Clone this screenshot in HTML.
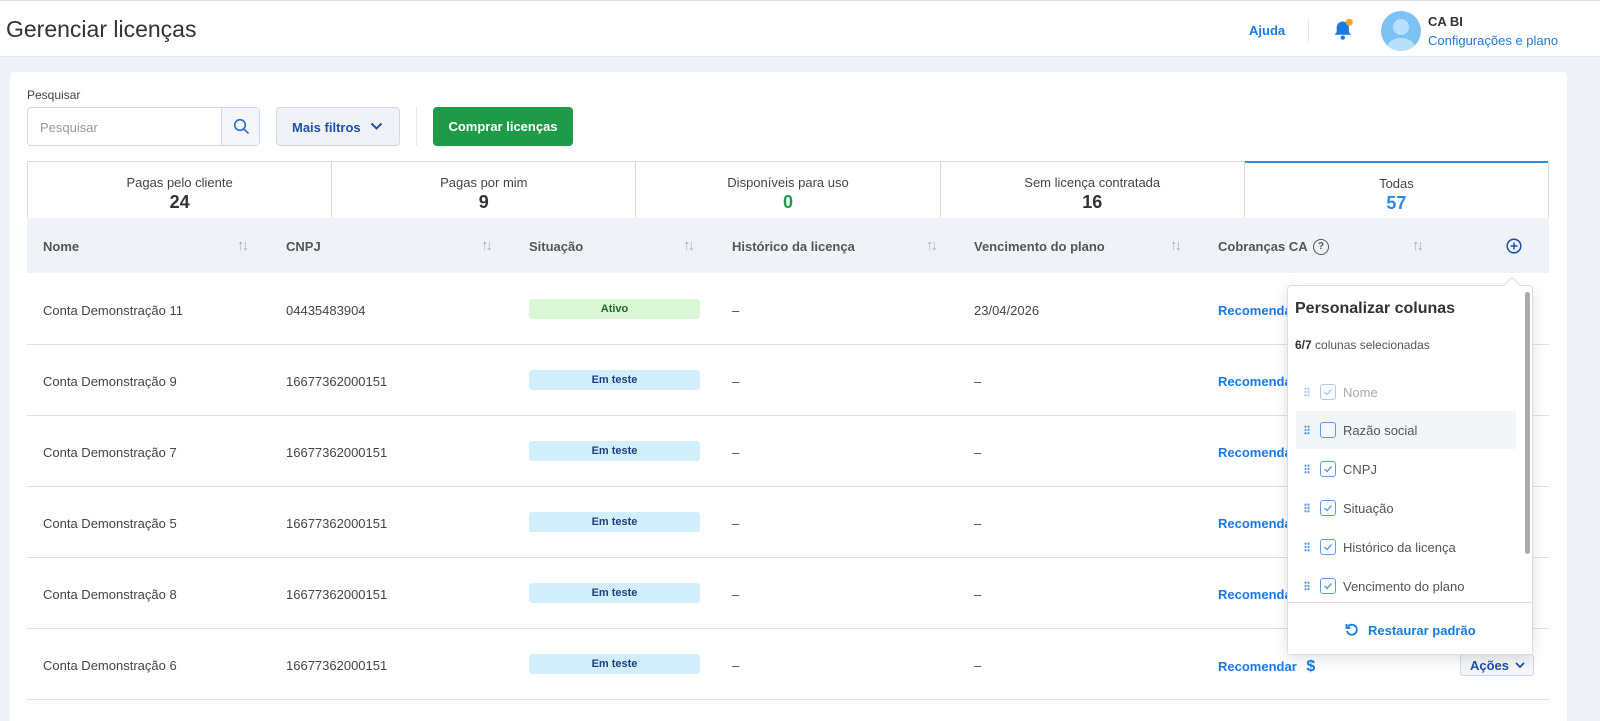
<!DOCTYPE html>
<html><head><meta charset="utf-8"><style>
*{box-sizing:border-box;margin:0;padding:0}
html,body{width:1600px;height:721px;overflow:hidden}
body{background:#eef1f6;font-family:"Liberation Sans",sans-serif;color:#333;position:relative}
.hdr{position:absolute;left:0;top:0;width:1600px;height:57px;background:#fff;border-top:1px solid #ddd;border-bottom:1px solid #e3e6ea}
.hdr h1{position:absolute;left:6px;top:15px;font-size:23px;font-weight:normal;color:#333}
.card{position:absolute;left:10px;top:72px;width:1557px;height:649px;background:#fff;border-radius:4px 4px 0 0}
.abs{position:absolute}
.blue{color:#1a7ae3}
.tabs{position:absolute;left:27px;top:161px;width:1522px;height:58px;display:flex;border:1px solid #d5dce6;border-bottom:none}
.tab{flex:1;text-align:center;border-right:1px solid #d5dce6;padding-top:13px;font-size:13px;color:#444}
.tab:last-child{border-right:none;border-top:2px solid #2f8ae8;margin-top:-1px}
.tab b{display:block;font-size:18px;margin-top:2px;color:#333}
.th{position:absolute;left:27px;top:218px;width:1522px;height:55px;background:#eff3f8}
.th span{position:absolute;top:21px;font-size:13px;font-weight:bold;color:#555}
.th i{position:absolute;top:19px;font-style:normal;color:#aab;font-size:15px;letter-spacing:-3px}
.row{position:absolute;left:27px;width:1522px;height:71px;border-bottom:1px solid #d9e1ea;font-size:13px;color:#444}
.row span{position:absolute;top:29px}
.badge{position:absolute;left:502px;top:25px;width:171px;height:20px;border-radius:3px;font-size:11px;font-weight:bold;text-align:center;line-height:20px}
.pop{position:absolute;left:1287px;top:285px;width:246px;height:370px;background:#fff;border:1px solid #d9dee6;border-radius:4px;box-shadow:0 4px 14px rgba(0,0,0,.12)}
.it{position:absolute;left:8px;width:220px;height:38px;font-size:13px;color:#555}
.it .dots{position:absolute;left:8px;top:14px;width:6px;height:10px;background:radial-gradient(circle,#5b9be8 1px,transparent 1.3px) 0 0/3px 3.3px}
.it .cb{position:absolute;left:24px;top:11px;width:16px;height:16px;border:1.5px solid #5b9be8;border-radius:3px}
.it .cb svg{position:absolute;left:2px;top:2px}
.it .t{position:absolute;left:47px;top:12px}
</style></head><body>
<div class="hdr"><h1>Gerenciar licenças</h1>
<div class="abs blue" style="left:1249px;top:22px;font-size:13px;font-weight:bold">Ajuda</div>
<div class="abs" style="left:1308px;top:18px;width:1px;height:24px;background:#e3e6ea"></div>
<svg class="abs" style="left:1331px;top:16px" width="26" height="26" viewBox="0 0 22 22"><path d="M3 15h14l-1.8-2.2V9a5.2 5.2 0 0 0-10.4 0v3.8z" fill="#1a7ae3"/><circle cx="10" cy="17.5" r="1.8" fill="#1a7ae3"/><circle cx="15.5" cy="4.5" r="3" fill="#f5a623"/></svg>
<div class="abs" style="left:1381px;top:10px;width:40px;height:40px;border-radius:50%;background:#7cc2f5;overflow:hidden"><div class="abs" style="left:12px;top:8px;width:16px;height:16px;border-radius:50%;background:#b8dffb"></div><div class="abs" style="left:6px;top:27px;width:28px;height:20px;border-radius:50%;background:#b8dffb"></div></div>
<div class="abs" style="left:1428px;top:13px;font-size:13px;font-weight:bold;color:#333">CA BI</div>
<div class="abs blue" style="left:1428px;top:32px;font-size:13px">Configurações e plano</div>
</div>
<div class="card"></div>
<div class="abs" style="left:27px;top:88px;font-size:12px;color:#444">Pesquisar</div>
<div class="abs" style="left:27px;top:107px;width:233px;height:39px;border:1px solid #cfd7e2;border-radius:4px"><span class="abs" style="left:12px;top:12px;font-size:13px;color:#999">Pesquisar</span><div class="abs" style="left:193px;top:0;width:38px;height:37px;border-left:1px solid #cfd7e2;background:#f4f6f9"><svg class="abs" style="left:11px;top:10px" width="17" height="17" viewBox="0 0 17 17"><circle cx="7" cy="7" r="5.3" fill="none" stroke="#2a6fd1" stroke-width="1.6"/><path d="M11 11l4.5 4.5" stroke="#2a6fd1" stroke-width="1.6"/></svg></div></div>
<div class="abs" style="left:276px;top:107px;width:124px;height:39px;border:1px solid #cfd7e2;border-radius:4px;background:#eff3f8;font-size:13px;font-weight:bold;color:#1f4fa8;padding:12px 0 0 15px">Mais filtros <svg style="position:absolute;left:93px;top:14px" width="13" height="9" viewBox="0 0 13 9"><path d="M1.5 1.5l5 5 5-5" fill="none" stroke="#1f4fa8" stroke-width="2"/></svg></div>
<div class="abs" style="left:416px;top:107px;width:1px;height:39px;background:#e3e6ea"></div>
<div class="abs" style="left:433px;top:107px;width:140px;height:39px;border-radius:4px;background:#1f9a48;color:#fff;font-size:13px;font-weight:bold;text-align:center;line-height:39px">Comprar licenças</div>
<div class="tabs">
<div class="tab">Pagas pelo cliente<b>24</b></div>
<div class="tab">Pagas por mim<b>9</b></div>
<div class="tab">Disponíveis para uso<b style="color:#1f9a48">0</b></div>
<div class="tab">Sem licença contratada<b>16</b></div>
<div class="tab">Todas<b style="color:#2f8ae8">57</b></div>
</div>
<div class="th">
<span style="left:16px">Nome</span><i style="left:210px">↑↓</i>
<span style="left:259px">CNPJ</span><i style="left:454px">↑↓</i>
<span style="left:502px">Situação</span><i style="left:656px">↑↓</i>
<span style="left:705px">Histórico da licença</span><i style="left:899px">↑↓</i>
<span style="left:947px">Vencimento do plano</span><i style="left:1143px">↑↓</i>
<span style="left:1191px">Cobranças CA</span><div class="abs" style="left:1286px;top:21px;width:16px;height:16px;border:1.5px solid #555;border-radius:50%;font-size:10px;font-weight:bold;color:#555;text-align:center;line-height:13px">?</div><i style="left:1385px">↑↓</i>
<svg class="abs" style="left:1479px;top:20px" width="16" height="16" viewBox="0 0 16 16"><circle cx="8" cy="8" r="6.8" fill="none" stroke="#1f4fa8" stroke-width="1.5"/><path d="M8 4.5v7M4.5 8h7" stroke="#1f4fa8" stroke-width="1.5"/></svg>
</div>
<div class="row" style="top:274px"><span style="left:16px">Conta Demonstração 11</span><span style="left:259px">04435483904</span><div class="badge" style="background:#d9f7d4;color:#1d6b2e">Ativo</div><span style="left:705px">–</span><span style="left:947px">23/04/2026</span><span class="blue" style="left:1191px;font-weight:bold">Recomendar</span></div>
<div class="row" style="top:345px"><span style="left:16px">Conta Demonstração 9</span><span style="left:259px">16677362000151</span><div class="badge" style="background:#d3eefb;color:#1f3f7a">Em teste</div><span style="left:705px">–</span><span style="left:947px">–</span><span class="blue" style="left:1191px;font-weight:bold">Recomendar</span></div>
<div class="row" style="top:416px"><span style="left:16px">Conta Demonstração 7</span><span style="left:259px">16677362000151</span><div class="badge" style="background:#d3eefb;color:#1f3f7a">Em teste</div><span style="left:705px">–</span><span style="left:947px">–</span><span class="blue" style="left:1191px;font-weight:bold">Recomendar</span></div>
<div class="row" style="top:487px"><span style="left:16px">Conta Demonstração 5</span><span style="left:259px">16677362000151</span><div class="badge" style="background:#d3eefb;color:#1f3f7a">Em teste</div><span style="left:705px">–</span><span style="left:947px">–</span><span class="blue" style="left:1191px;font-weight:bold">Recomendar</span></div>
<div class="row" style="top:558px"><span style="left:16px">Conta Demonstração 8</span><span style="left:259px">16677362000151</span><div class="badge" style="background:#d3eefb;color:#1f3f7a">Em teste</div><span style="left:705px">–</span><span style="left:947px">–</span><span class="blue" style="left:1191px;font-weight:bold">Recomendar</span></div>
<div class="row" style="top:629px"><span style="left:16px">Conta Demonstração 6</span><span style="left:259px">16677362000151</span><div class="badge" style="background:#d3eefb;color:#1f3f7a">Em teste</div><span style="left:705px">–</span><span style="left:947px">–</span><span class="blue" style="left:1191px;font-weight:bold;white-space:nowrap">Recomendar <b style="margin-left:6px;font-size:16px">$</b></span>
<div class="abs" style="left:1433px;top:25px;width:74px;height:22px;border:1px solid #cfd7e2;border-radius:3px;background:#f4f6f9;font-size:13px;font-weight:bold;color:#1f4fa8;padding:3px 0 0 9px;white-space:nowrap">Ações<svg style="position:absolute;left:54px;top:7px" width="10" height="7" viewBox="0 0 10 7"><path d="M1 1l4 4 4-4" fill="none" stroke="#1f4fa8" stroke-width="1.8"/></svg></div></div>
<div class="pop">
<div class="abs" style="left:218px;top:-7px;width:12px;height:12px;background:#fff;border-left:1px solid #d9dee6;border-top:1px solid #d9dee6;transform:rotate(45deg)"></div>
<div class="abs" style="left:7px;top:14px;font-size:16px;font-weight:bold;color:#333">Personalizar colunas</div>
<div class="abs" style="left:7px;top:52px;font-size:12px;color:#555"><b style="color:#333">6/7</b> colunas selecionadas</div>
<div class="abs" style="left:237px;top:6px;width:5px;height:262px;border-radius:3px;background:#aaa"></div>
<div class="it" style="top:87px;opacity:.5"><div class="dots"></div><div class="cb"><svg width="10" height="10" viewBox="0 0 10 10"><path d="M1.5 5l2.5 2.5 4.5-5" fill="none" stroke="#5b9be8" stroke-width="1.4"/></svg></div><div class="t">Nome</div></div>
<div class="it" style="top:125px;background:#f4f5f7"><div class="dots"></div><div class="cb"></div><div class="t">Razão social</div></div>
<div class="it" style="top:164px"><div class="dots"></div><div class="cb"><svg width="10" height="10" viewBox="0 0 10 10"><path d="M1.5 5l2.5 2.5 4.5-5" fill="none" stroke="#5b9be8" stroke-width="1.4"/></svg></div><div class="t">CNPJ</div></div>
<div class="it" style="top:203px"><div class="dots"></div><div class="cb"><svg width="10" height="10" viewBox="0 0 10 10"><path d="M1.5 5l2.5 2.5 4.5-5" fill="none" stroke="#5b9be8" stroke-width="1.4"/></svg></div><div class="t">Situação</div></div>
<div class="it" style="top:242px"><div class="dots"></div><div class="cb"><svg width="10" height="10" viewBox="0 0 10 10"><path d="M1.5 5l2.5 2.5 4.5-5" fill="none" stroke="#5b9be8" stroke-width="1.4"/></svg></div><div class="t">Histórico da licença</div></div>
<div class="it" style="top:281px"><div class="dots"></div><div class="cb"><svg width="10" height="10" viewBox="0 0 10 10"><path d="M1.5 5l2.5 2.5 4.5-5" fill="none" stroke="#5b9be8" stroke-width="1.4"/></svg></div><div class="t">Vencimento do plano</div></div>
<div class="abs" style="left:0;top:316px;width:244px;height:52px;background:#fff;border-top:1px solid #d9dee6">
<svg class="abs" style="left:57px;top:20px" width="14" height="14" viewBox="0 0 14 14"><path d="M3 3.5A5 5 0 1 1 2 8" fill="none" stroke="#1a7ae3" stroke-width="1.8"/><path d="M1.5 1v4h4" fill="none" stroke="#1a7ae3" stroke-width="1.8"/></svg>
<div class="abs blue" style="left:80px;top:20px;font-size:13px;font-weight:bold">Restaurar padrão</div></div>
</div>
</body></html>
